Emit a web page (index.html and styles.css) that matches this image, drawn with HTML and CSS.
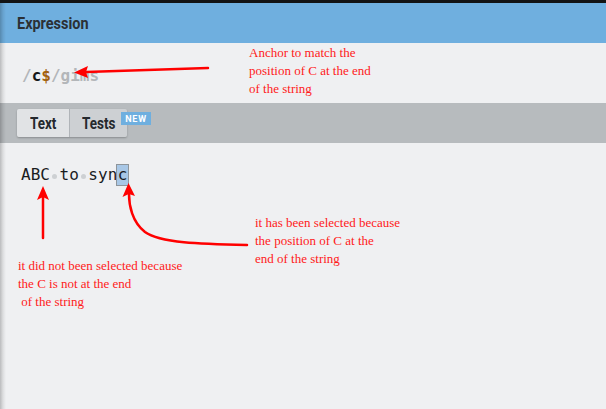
FILE: index.html
```html
<!DOCTYPE html>
<html>
<head>
<meta charset="utf-8">
<link rel="stylesheet" href="styles.css">
</head>
<body>
<div class="app">
  <div class="topbar"></div>
  <header class="head"><h1 class="title">Expression</h1></header>
  <section class="expr">
    <span class="delim">/</span><span class="lit">c</span><span class="anchor">$</span><span class="delim">/gims</span>
  </section>
  <nav class="tabs">
    <div class="group">
      <span class="tab active"><span class="tab-label">Text</span></span><span class="tab"><span class="tab-label">Tests</span></span>
      <span class="badge">NEW</span>
    </div>
  </nav>
  <main class="textarea">
    <div class="line">ABC<span class="sp"></span>to<span class="sp"></span>syn<span class="match">c</span></div>
  </main>

  <p class="note note-top">Anchor to match the<br>position of C at the end<br>of the string</p>
  <p class="note note-left">it did not been selected because<br>the C is not at the end<br>&nbsp;of the string</p>
  <p class="note note-right">it has been selected because<br>the position of C at the<br>end of the string</p>

  <svg class="arrows" width="606" height="409" viewBox="0 0 606 409">
    <g stroke="#ff0000" stroke-width="2.5" fill="none" stroke-linecap="round">
      <path d="M208 68 L86 72"/>
      <path d="M43 238 L43 196"/>
      <path d="M247 245 C200 244 160 243 145 232 C132 222 129 205 129 194"/>
    </g>
    <g fill="#ff0000">
      <path d="M74 72.5 L88 66 L86 72 L88 78 Z"/>
      <path d="M43 186 L37 200 L43 197 L49 200 Z"/>
      <path d="M128.5 183 L122.5 197 L128.8 194 L135 196 Z"/>
    </g>
  </svg>
  <div class="edge"></div>
</div>
</body>
</html>
```

FILE: styles.css
```css
* { box-sizing: border-box; }
html, body { margin: 0; padding: 0; }
body {
  width: 606px;
  height: 409px;
  overflow: hidden;
  background: #eff0f2;
  font-family: "Roboto", "Liberation Sans", sans-serif;
}
.app {
  position: relative;
  width: 606px;
  height: 409px;
  display: flex;
  flex-direction: column;
}
.topbar {
  height: 3px;
  background: #121314;
  flex: none;
}
.head {
  height: 40px;
  background: #6fafdf;
  display: flex;
  align-items: center;
  padding-left: 17px;
  flex: none;
}
.title {
  margin: 0;
  font-size: 17px;
  font-weight: 700;
  color: #2b3035;
  transform: scaleX(0.85);
  transform-origin: left center;
}
.expr {
  height: 60px;
  background: #eff0f2;
  display: flex;
  align-items: center;
  padding: 4px 0 0 22px;
  font-family: "DejaVu Sans Mono", monospace;
  font-weight: 700;
  font-size: 16px;
  flex: none;
}
.delim { color: #b3b6b9; }
.lit { color: #16181a; }
.anchor { color: #a2620f; }
.tabs {
  height: 40px;
  background: #b7bbbe;
  display: flex;
  align-items: center;
  padding-left: 17px;
  flex: none;
}
.group {
  position: relative;
  display: flex;
  height: 28px;
  border-radius: 2px;
  box-shadow: 0 1px 2px rgba(0,0,0,0.25);
}
.tab {
  display: flex;
  align-items: center;
  height: 28px;
  font-size: 16px;
  font-weight: 700;
  color: #25292d;
  background: #cdd0d3;
  width: 58px;
  border-left: 1px solid #b0b4b8;
  padding-left: 12px;
  border-radius: 0 2px 2px 0;
}
.tab.active {
  width: 52px;
  background: #e1e3e5;
  border-left: none;
  border-radius: 2px 0 0 2px;
  padding-left: 13px;
}
.tab-label {
  display: inline-block;
  transform: scaleX(0.84);
  transform-origin: left center;
}
.badge {
  position: absolute;
  left: 104px;
  top: 3px;
  height: 13px;
  width: 30px;
  background: #6fafdf;
  color: #fff;
  font-size: 9px;
  font-weight: 700;
  letter-spacing: 0.8px;
  display: flex;
  align-items: center;
  justify-content: center;
}
.textarea {
  flex: 1;
  background: #eff0f2;
  padding: 21px 0 0 21px;
}
.line {
  font-family: "DejaVu Sans Mono", monospace;
  font-size: 16px;
  color: #1a1c1e;
  line-height: 22px;
  display: flex;
  align-items: center;
}
.sp {
  display: inline-flex;
  width: 0.6em;
  height: 22px;
  align-items: center;
  justify-content: center;
  padding-top: 2px;
}
.sp::after {
  content: "";
  width: 5px;
  height: 5px;
  border-radius: 50%;
  background: #cdd0d3;
}
.match {
  display: inline-block;
  height: 22px;
  background: #a8c7e6;
  border: 1.5px solid #8e959b;
  margin-left: -1px;
  padding: 0 0.5px;
  line-height: 19px;
}
.note {
  position: absolute;
  margin: 0;
  font-family: "Liberation Serif", "Times New Roman", serif;
  font-size: 13px;
  line-height: 18px;
  color: #ff1a1a;
}
.note-top { left: 249px; top: 44px; }
.note-left { left: 18px; top: 257px; }
.note-right { left: 255px; top: 214px; }
.arrows {
  position: absolute;
  left: 0;
  top: 0;
}
.edge {
  position: absolute;
  left: 0;
  top: 3px;
  bottom: 0;
  width: 6px;
  background: linear-gradient(to right, rgba(0,0,0,0.22), rgba(0,0,0,0.08) 50%, rgba(0,0,0,0));
  pointer-events: none;
}
```
